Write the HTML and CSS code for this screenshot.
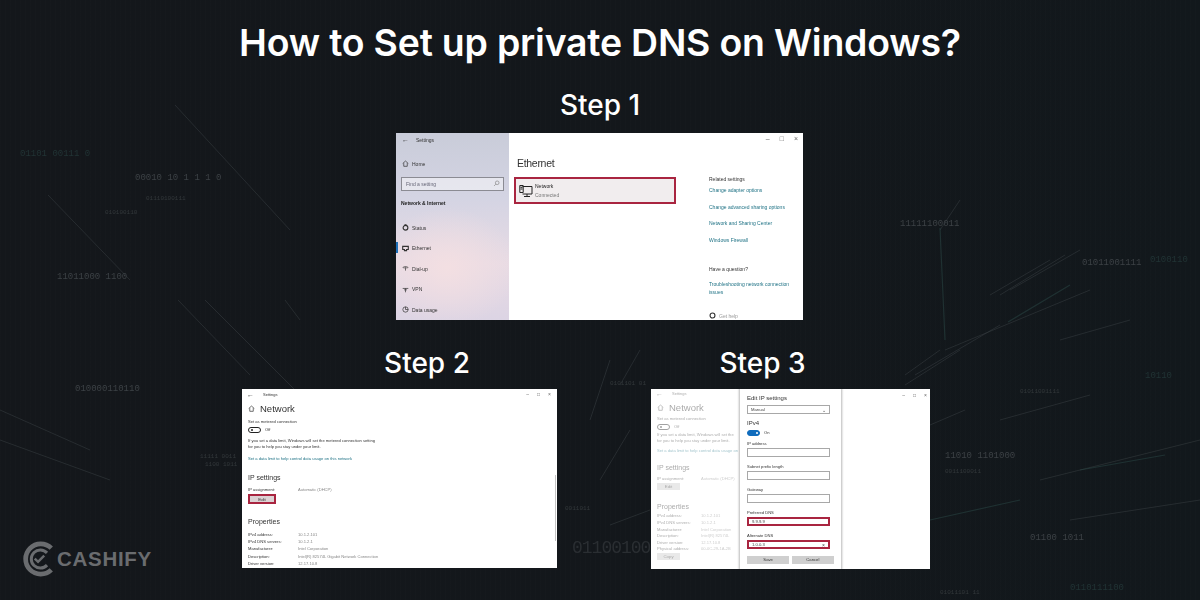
FILE: index.html
```html
<!DOCTYPE html>
<html lang="en">
<head>
<meta charset="utf-8">
<title>How to Set up private DNS on Windows?</title>
<link rel="stylesheet" href="styles.css">
</head>
<body>
<main class="page">
  <svg class="backdrop" viewBox="0 0 1200 600" aria-hidden="true">
    <g class="lines-grey">
      <path d="M48 195 130 280M175 105 290 230M178 300 250 375M205 300 300 395M0 410 90 450M0 440 110 480M285 300 300 320M440 230 520 320"/>
      <path d="M905 375 940 350M905 385 960 350M915 375 1000 325M990 295 1050 260M1000 295 1065 255M945 350 1090 290M1060 340 1130 320M930 425 965 410M1000 420 1090 395M1040 480 1200 440M1070 520 1200 500"/>
      <path d="M590 420 610 360M620 385 640 350M600 480 630 430M610 525 650 510M940 230 960 200M1010 290 1080 250"/>
    </g>
    <g class="lines-teal">
      <path d="M940 228 945 340M1008 322 1070 285M930 520 1020 500M1080 470 1165 455"/>
    </g>
    <g class="bits">
      <text x="20" y="156" class="dim-teal">01101 00111 0</text>
      <text x="135" y="180">00010 10 1 1 1 0</text>
      <text x="146" y="200" class="small">01110100111</text>
      <text x="105" y="214" class="small">010100110</text>
      <text x="57" y="279">11011000 1100</text>
      <text x="75" y="391">010000110110</text>
      <text x="200" y="458" class="small">11111 0011</text>
      <text x="205" y="466" class="small">1100 1011</text>
      <text x="900" y="226">11111100011</text>
      <text x="1082" y="265">01011001111</text>
      <text x="1020" y="393" class="small">01011001111</text>
      <text x="1150" y="262" class="dim-teal">0100110</text>
      <text x="945" y="458">11010 1101000</text>
      <text x="945" y="473" class="small">0011100011</text>
      <text x="1145" y="378" class="dim-teal">10110</text>
      <text x="1030" y="540">01100 1011</text>
      <text x="565" y="510" class="small">0011011</text>
      <text x="572" y="553" class="big">01100100</text>
      <text x="1070" y="590" class="dim-teal">0110111100</text>
      <text x="940" y="594" class="small">01011101 11</text>
      <text x="610" y="385" class="small">0101101 01</text>
    </g>
  </svg>

  <h1 class="title">How to Set up private DNS on Windows?</h1>

  <section class="step step-one">
    <h2 class="step-label">Step 1</h2>
    <div class="win win-one">
      <aside class="side">
        <div class="side-top"><span class="arrow">&#8592;</span><span>Settings</span></div>
        <div class="side-item home">
          <svg class="ico" viewBox="0 0 10 10"><path d="M1 5 5 1.5 9 5M2.5 4.5V9h5V4.5"/></svg><span>Home</span>
        </div>
        <div class="find"><span>Find a setting</span>
          <svg class="ico find-ico" viewBox="0 0 10 10"><circle cx="6" cy="4" r="2.6"/><path d="M4 6 1.5 8.5"/></svg>
        </div>
        <div class="side-head">Network &amp; Internet</div>
        <nav class="side-nav">
          <div class="side-item"><svg class="ico bold" viewBox="0 0 10 10"><circle cx="5" cy="5.4" r="3.4"/><path d="M3.5 1.2h3"/></svg><span>Status</span></div>
          <div class="side-item current"><svg class="ico bold" viewBox="0 0 10 10"><path d="M1 2h8v4.5H6.5V8h-3V6.5H1z"/></svg><span>Ethernet</span></div>
          <div class="side-item"><svg class="ico" viewBox="0 0 10 10"><path d="M1 3.5Q5 .8 9 3.5M3 3.5V5M7 3.5V5M5 3v5"/></svg><span>Dial-up</span></div>
          <div class="side-item"><svg class="ico" viewBox="0 0 10 10"><path d="M1 3.5h8M3 5.5h4M5 3.5V9"/></svg><span>VPN</span></div>
          <div class="side-item"><svg class="ico" viewBox="0 0 10 10"><circle cx="5" cy="5" r="3.8"/><path d="M5 1.2V5h3.8"/></svg><span>Data usage</span></div>
        </nav>
      </aside>
      <div class="main-one">
        <div class="controls"><span>&#8211;</span><span>&#9633;</span><span>&#215;</span></div>
        <div class="main-cols">
          <div class="main-left">
            <h3 class="eth">Ethernet</h3>
            <div class="net-card">
              <svg class="net-ico" viewBox="0 0 14 14"><path d="M3.5 2.5H13V10H3.5M8 10v2.5M5 12.5h6M.8 1.5h3.4v7H.8zM1.5 3.3h2M1.5 5h2"/></svg>
              <div class="net-text"><span class="net-name">Network</span><span class="net-state">Connected</span></div>
            </div>
          </div>
          <div class="main-right">
            <span class="rel-head">Related settings</span>
            <a class="rel-link">Change adapter options</a>
            <a class="rel-link">Change advanced sharing options</a>
            <a class="rel-link">Network and Sharing Center</a>
            <a class="rel-link">Windows Firewall</a>
            <span class="rel-head question">Have a question?</span>
            <a class="rel-link trouble">Troubleshooting network connection issues</a>
            <span class="get-help"><svg class="ico bold" viewBox="0 0 10 10"><circle cx="5" cy="5" r="3.5"/></svg>Get help</span>
          </div>
        </div>
      </div>
    </div>
  </section>

  <div class="step-row">
    <section class="step step-two">
      <h2 class="step-label">Step 2</h2>
      <div class="win win-two">
        <div class="bar"><span class="arrow">&#8592;</span><span>Settings</span><span class="controls small"><span>&#8211;</span><span>&#9633;</span><span>&#215;</span></span></div>
        <div class="pane">
          <div class="pane-head"><svg class="ico" viewBox="0 0 10 10"><path d="M1 5 5 1.5 9 5M2.5 4.5V9h5V4.5"/></svg><span>Network</span></div>
          <p class="t l-meter">Set as metered connection</p>
          <div class="toggle-line"><span class="toggle"></span><span class="t">Off</span></div>
          <p class="t l-limit">If you set a data limit, Windows will set the metered connection setting<br>for you to help you stay under your limit.</p>
          <p class="t link l-link">Set a data limit to help control data usage on this network</p>
          <h3 class="sub l-ip">IP settings</h3>
          <div class="kv l-kv"><span>IP assignment:</span><span class="val">Automatic (DHCP)</span></div>
          <button class="edit-btn">Edit</button>
          <h3 class="sub l-prop">Properties</h3>
          <div class="kv"><span>IPv4 address:</span><span class="val">10.1.2.101</span></div>
          <div class="kv"><span>IPv4 DNS servers:</span><span class="val">10.1.2.1</span></div>
          <div class="kv"><span>Manufacturer:</span><span class="val">Intel Corporation</span></div>
          <div class="kv"><span>Description:</span><span class="val">Intel(R) 82574L Gigabit Network Connection</span></div>
          <div class="kv"><span>Driver version:</span><span class="val">12.17.10.8</span></div>
        </div>
        <span class="scroll"></span>
      </div>
    </section>

    <section class="step step-three">
      <h2 class="step-label">Step 3</h2>
      <div class="win win-three">
        <div class="faded">
          <div class="bar"><span class="arrow">&#8592;</span><span>Settings</span></div>
          <div class="pane">
            <div class="pane-head"><svg class="ico" viewBox="0 0 10 10"><path d="M1 5 5 1.5 9 5M2.5 4.5V9h5V4.5"/></svg><span>Network</span></div>
            <p class="t l-meter">Set as metered connection</p>
            <div class="toggle-line"><span class="toggle"></span><span class="t">Off</span></div>
            <p class="t l-limit">If you set a data limit, Windows will set the<br>for you to help you stay under your limit.</p>
            <p class="t link l-link">Set a data limit to help control data usage on</p>
            <h3 class="sub l-ip">IP settings</h3>
            <div class="kv l-kv"><span>IP assignment:</span><span class="val">Automatic (DHCP)</span></div>
            <button class="edit-btn plain">Edit</button>
            <h3 class="sub l-prop">Properties</h3>
            <div class="kv"><span>IPv4 address:</span><span class="val">10.1.2.101</span></div>
            <div class="kv"><span>IPv4 DNS servers:</span><span class="val">10.1.2.1</span></div>
            <div class="kv"><span>Manufacturer:</span><span class="val">Intel Corporation</span></div>
            <div class="kv"><span>Description:</span><span class="val">Intel(R) 82574L</span></div>
            <div class="kv"><span>Driver version:</span><span class="val">12.17.10.8</span></div>
            <div class="kv"><span>Physical address:</span><span class="val">00-0C-29-1A-2B</span></div>
            <button class="edit-btn plain copy">Copy</button>
          </div>
        </div>
        <div class="controls small corner"><span>&#8211;</span><span>&#9633;</span><span>&#215;</span></div>
        <div class="dialog">
          <h3 class="dlg-title">Edit IP settings</h3>
          <div class="field select">Manual<span class="chev">&#8964;</span></div>
          <h4 class="dlg-ipv4">IPv4</h4>
          <div class="toggle-line on"><span class="toggle"></span><span class="t">On</span></div>
          <p class="t lab">IP address</p>
          <div class="field"></div>
          <p class="t lab">Subnet prefix length</p>
          <div class="field"></div>
          <p class="t lab">Gateway</p>
          <div class="field"></div>
          <p class="t lab">Preferred DNS</p>
          <div class="field red">9.9.9.9</div>
          <p class="t lab">Alternate DNS</p>
          <div class="field red">1.0.0.3<span class="chev">&#215;</span></div>
          <div class="dlg-btns"><button>Save</button><button>Cancel</button></div>
        </div>
      </div>
    </section>
  </div>

  <div class="logo">
    <svg class="logo-mark" viewBox="0 0 36 40">
      <path class="ring-o" d="M31 8.5A16 16 0 1 0 31 31.5"/>
      <path class="ring-i" d="M26.5 13.5A9.6 9.6 0 1 0 26.5 26.5"/>
      <path class="check" d="M13.5 19.5 17 23 23.5 16.5"/>
    </svg>
    <span class="logo-text">CASHIFY</span>
  </div>
</main>
</body>
</html>
```

FILE: styles.css
```css
* { box-sizing: border-box; }
html, body { margin: 0; padding: 0; }
body { width: 1200px; height: 600px; overflow: hidden; background: #14171c; font-family: "Liberation Sans", Arial, sans-serif; }

.page {
  position: relative;
  width: 1200px;
  height: 600px;
  overflow: hidden;
  display: flex;
  flex-direction: column;
  align-items: center;
  background:
    repeating-linear-gradient(90deg, rgba(255,255,255,.006) 0 1px, transparent 1px 5px),
    linear-gradient(90deg, #14171b 0%, #13171b 60%, #12181c 100%);
}

.backdrop { position: absolute; inset: 0; width: 1200px; height: 600px; filter: blur(.7px); }
.lines-grey path { fill: none; stroke: #3a4044; stroke-width: 1; opacity: .5; }
.lines-teal path { fill: none; stroke: #2c4a48; stroke-width: 1.2; opacity: .5; }
.bits text { font: 9px "Liberation Mono", monospace; fill: #3c4145; }
.bits .small { font-size: 6px; fill: #33383b; }
.bits .dim-teal { fill: #213334; }
.bits .big { font-size: 18px; letter-spacing: -1px; fill: #2a2e32; }

.title {
  position: relative;
  margin: 21px 0 0;
  font: 600 37.4px/44px Inter, "Open Sans", sans-serif;
  color: #fff;
  letter-spacing: -.2px;
  white-space: nowrap;
}
.step { position: relative; display: flex; flex-direction: column; align-items: center; }
.step-label { margin: 0; font: 500 28px/34px Inter, "Open Sans", sans-serif; color: #fff; white-space: nowrap; }
.step-one { margin-top: 23px; }
.step-one .step-label { margin-bottom: 11px; }
.step-row { position: relative; display: flex; gap: 94px; margin-top: 26px; width: 1200px; padding-left: 242px; }
.step-two .step-label { margin-bottom: 9px; padding-left: 55px; }
.step-three .step-label { margin-bottom: 9px; padding-right: 56px; }

.win { position: relative; background: #fff; color: #333; font-size: 5px; overflow: hidden; }
.win-one { width: 407px; height: 187px; display: flex; font-size: 5px; margin-left: -1px; }
.win-two { width: 315px; height: 179px; }
.win-three { width: 279px; height: 180px; }
.win-one > *, .win-two > *, .win-three > * { filter: blur(.35px); }

.ico { width: 7px; height: 7px; flex: none; fill: none; stroke: #333; stroke-width: 1; }
.ico.bold { stroke-width: 1.6; }
.arrow { font-size: 7px; color: #333; }

/* window one: sidebar */
.side {
  width: 113px;
  flex: none;
  padding: 0 5px;
  background:
    radial-gradient(70px 60px at 45% 72%, #f3dfe2 0%, rgba(243,223,226,0) 100%),
    linear-gradient(180deg, #c9ccd9 0%, #d4d4e3 35%, #e8dbe4 70%, #dcd4e4 100%);
  display: flex;
  flex-direction: column;
}
.side-top { height: 14px; display: flex; align-items: center; gap: 7px; padding-left: 1px; }
.side-item { position: relative; display: flex; align-items: center; gap: 3px; height: 20.5px; padding-left: 1px; }
.home { height: 13px; margin-top: 10.5px; }
.find { display: flex; align-items: center; justify-content: space-between; height: 14px; margin-top: 6.5px; width: 103px; padding: 0 3px 0 4px; border: 1px solid #8b8b93; background: rgba(255,255,255,.45); color: #667; }
.find-ico { stroke: #888; }
.side-head { font-weight: bold; margin-top: 7px; height: 14px; line-height: 10px; color: #222; }
.side-nav { margin-top: 5.75px; }
.side-item.current::before { content: ""; position: absolute; left: -5px; top: 4px; width: 2px; height: 11px; background: #1d6fb8; }

/* window one: content */
.main-one { flex: 1; display: flex; flex-direction: column; }
.controls { display: flex; justify-content: flex-end; gap: 10px; padding: 2px 5px 0 0; font-size: 7px; color: #666; height: 14px; }
.controls.small { gap: 8px; padding: 0; height: auto; font-size: 5px; margin-left: auto; }
.main-cols { display: flex; }
.main-left { width: 200px; padding: 6px 0 0 5px; }
.eth { margin: 0 0 0 3px; font: 400 10.5px/20px "Liberation Sans", sans-serif; letter-spacing: -.3px; color: #333; }
.net-card { display: flex; align-items: center; gap: 2px; width: 162px; height: 27px; margin-top: 4px; padding-left: 3px; background: #f1edee; border: 2px solid #a92540; }
.net-ico { width: 14px; height: 14px; fill: none; stroke: #222; stroke-width: 1; }
.net-text { display: flex; flex-direction: column; gap: 3.5px; }
.net-name { color: #222; }
.net-state { color: #777; }
.main-right { padding: 29px 0 0 0; width: 85px; display: flex; flex-direction: column; }
.rel-head { color: #333; height: 11px; }
.rel-link { color: #1f7285; height: 16.6px; white-space: nowrap; }
.question { margin-top: 13px; height: 14px; }
.rel-link.trouble { white-space: normal; line-height: 8px; height: 32px; width: 85px; }
.get-help { display: flex; align-items: center; gap: 3px; color: #999; }

/* windows two and three */
.bar { display: flex; align-items: center; gap: 9px; height: 10px; padding: 0 6px 0 5px; font-size: 4px; }
.pane { padding: 0 6px; }
.pane-head { display: flex; align-items: center; gap: 5px; height: 16px; margin-top: 1px; font-size: 9.5px; color: #333; }
.t { margin: 0; font-size: 4.1px; line-height: 6px; color: #333; }
.link { color: #1f7285; }
.l-meter { margin-top: 3px; }
.toggle-line { display: flex; align-items: center; gap: 4px; height: 8px; margin-top: 1px; }
.toggle { position: relative; width: 13px; height: 6px; border: 1px solid #222; border-radius: 3px; }
.toggle::after { content: ""; position: absolute; left: 2px; top: 1px; width: 2px; height: 2px; border-radius: 50%; background: #222; }
.l-limit { margin-top: 4px; }
.l-link { margin-top: 6px; }
.sub { margin: 11px 0 0; font: 400 7px/9px "Liberation Sans", sans-serif; color: #333; }
.kv { display: flex; height: 7.4px; align-items: center; font-size: 4.1px; white-space: nowrap; }
.kv > span:first-child { width: 50px; color: #333; }
.val { color: #888; }
.l-kv { margin-top: 4px; }
.edit-btn { display: block; width: 28px; height: 10px; margin: 1px 0 0; padding: 0; font: 4.4px "Liberation Sans", sans-serif; color: #333; background: #dcd2d4; border: 2px solid #a92540; }
.edit-btn.plain { border: 0; background: #ccc; width: 23px; height: 7px; }
.edit-btn.copy { margin-top: 1px; }
.sub.l-prop { margin-top: 13px; margin-bottom: 4px; }
.scroll { position: absolute; right: 1px; top: 86px; width: 1px; height: 66px; background: #c4c4c4; }

.faded { opacity: .42; height: 100%; }
.faded .bar { height: 9px; }
.faded .l-meter { margin-top: 1px; }
.faded .l-limit { margin-top: 1px; }
.faded .l-link { margin-top: 4px; }
.faded .sub { margin-top: 9px; }
.faded .l-kv { margin-top: 3px; }
.faded .sub.l-prop { margin-top: 12px; margin-bottom: 2px; }
.faded .kv { height: 6.6px; }
.faded .kv > span:first-child { width: 44px; }
.corner { position: absolute; top: 3px; right: 3px; display: flex; }
.dialog { position: absolute; left: 89px; top: 0; width: 101px; height: 180px; background: #fff; padding: 4px 7px 0 7px; box-shadow: 0 0 2px 1px rgba(0,0,0,.28); }
.dlg-title { margin: 0 0 2px; font: 400 6px/10px "Liberation Sans", sans-serif; color: #333; }
.field { position: relative; display: flex; align-items: center; justify-content: space-between; width: 83px; height: 9px; padding: 0 3px; border: 1.2px solid #a8a8a8; font-size: 4.2px; color: #444; }
.field.red { border: 2px solid #a92540; }
.chev { font-size: 5px; }
.dlg-ipv4 { margin: 5px 0 0; font: 400 6px/8px "Liberation Sans", sans-serif; color: #333; }
.toggle-line.on { margin-top: 2px; }
.on .toggle { background: #0f6cbd; border-color: #0f6cbd; }
.on .toggle::after { left: 8px; background: #fff; }
.lab { line-height: 6px; }
.toggle-line + .lab { margin-top: 4px; }
.field + .lab { margin-top: 7px; height: 6px; }
.lab + .field { margin-top: 1px; }
.dlg-btns { display: flex; gap: 2.5px; margin-top: 7px; width: 87px; }
.dlg-btns button { flex: 1; height: 7.5px; padding: 0; border: 0; background: #cfcfcf; font: 4.2px "Liberation Sans", sans-serif; color: #333; }

/* logo */
.logo { position: absolute; left: 22px; top: 540px; display: flex; align-items: center; gap: 1px; height: 38px; }
.logo-mark { width: 34px; height: 38px; fill: none; stroke: #6a6c6f; }
.ring-o { stroke-width: 5; }
.ring-i { stroke-width: 3.2; }
.check { stroke-width: 2.6; }
.logo-text { font: 700 20.5px/1 "Liberation Sans", Arial, sans-serif; color: #6a6c6f; letter-spacing: .7px; }
```
